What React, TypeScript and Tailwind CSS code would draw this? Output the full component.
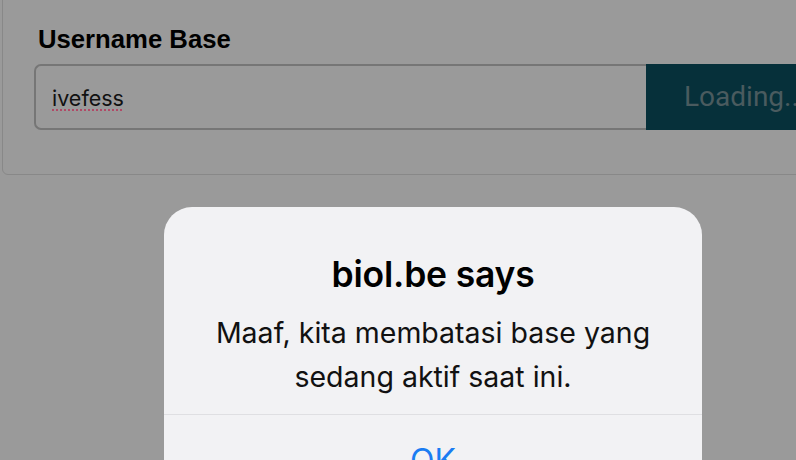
import React from "react";

// Alert shown over a dimmed form
export default function App() {
  return (
    <div className="relative w-[796px] h-[460px] overflow-hidden bg-[#9a9a9a]">
      {/* form card behind the overlay */}
      <div className="ml-[2px] mr-[-40px] mt-[-20px] h-[195px] rounded-md border-[1.5px] border-[#888888] pl-[31px] pt-[43px]">
        <label
          className="block pl-[4px] text-[25.7px] font-bold leading-[30px] text-black"
          style={{ fontFamily: '"Liberation Sans", Arial, sans-serif' }}
        >
          Username Base
        </label>
        <div className="mt-[10px] flex h-[66px]">
          <div
            className="flex w-[612px] shrink-0 items-center rounded-l-[7px] border-2 border-r-0 border-[#767676] pl-[16px] pt-[2px] text-[21.5px] text-[#111]"
            style={{ fontFamily: 'Inter, "Noto Sans", sans-serif' }}
          >
            <span className="underline decoration-dotted decoration-[#b04a66] decoration-2 underline-offset-[4px]">
              ivefess
            </span>
          </div>
          <div
            className="flex w-[200px] shrink-0 items-center bg-[#06303a] pl-[38px] text-[28px] text-[#4a5b5f]"
            style={{ fontFamily: 'Roboto, "Noto Sans", sans-serif' }}
          >
            Loading...
          </div>
        </div>
      </div>

      {/* alert dialog */}
      <div
        className="absolute left-[164px] top-[207px] w-[538px] rounded-[28px] bg-[#f2f2f4] text-center"
        style={{ fontFamily: 'Inter, "Noto Sans", sans-serif' }}
      >
        <div className="px-6 pt-[48px] pb-[15px]">
          <h2 className="text-[35.5px] font-semibold leading-[40px] tracking-[-0.2px] text-black">biol.be says</h2>
          <p className="mt-[16px] text-[28.5px] leading-[44px] text-[#111]">
            Maaf, kita membatasi base yang
            <br />
            sedang aktif saat ini.
          </p>
        </div>
        <div className="border-t border-[#dfdfe2] pt-[28px] pb-[30px] text-[32px] leading-[36px] text-[#1a7cf2]">
          OK
        </div>
      </div>
    </div>
  );
}
